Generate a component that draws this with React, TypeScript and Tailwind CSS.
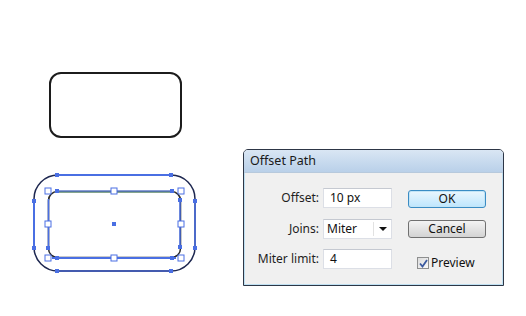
import React from "react";

const B = "#4a6fe3";

function Handle({ x, y }: { x: number; y: number }) {
  return <rect x={x - 3} y={y - 3} width={6} height={6} fill="#fff" stroke={B} strokeWidth={1} />;
}
function Anchor({ x, y }: { x: number; y: number }) {
  return <rect x={x - 2} y={y - 2} width={4} height={4} fill={B} />;
}

function Shapes() {
  return (
    <svg width={210} height={316} className="shrink-0">
      <rect x={50} y={73} width={131} height={64} rx={11} fill="none" stroke="#1c1c1c" strokeWidth={2} />
      {/* outer offset path */}
      <rect x={34} y={175} width={161} height={96} rx={24} fill="none" stroke="#1d2750" strokeWidth={1.5} />
      <line x1={57} y1={175} x2={171} y2={175} stroke={B} strokeWidth={2} />
      <line x1={57} y1={271} x2={171} y2={271} stroke="#3f5bc0" strokeWidth={1.5} />
      <line x1={34} y1={199} x2={34} y2={249} stroke={B} strokeWidth={2} />
      <line x1={195} y1={199} x2={195} y2={249} stroke={B} strokeWidth={1.5} />
      {/* inner path */}
      <rect x={48.5} y={191.5} width={132} height={66} rx={9} fill="none" stroke="#2a2a2a" strokeWidth={1.5} />
      <line x1={57} y1={192} x2={172} y2={192} stroke="#6f9a7a" strokeWidth={1.5} />
      <line x1={57} y1={191} x2={172} y2={191} stroke={B} strokeWidth={1} />
      <line x1={52} y1={258} x2={176} y2={258} stroke={B} strokeWidth={2} />
      <line x1={48.5} y1={199} x2={48.5} y2={249} stroke={B} strokeWidth={1.5} />
      <line x1={180} y1={199} x2={180} y2={249} stroke={B} strokeWidth={1.5} />
      {[
        [57, 175], [171, 175], [34, 201], [34, 248], [195, 201], [195, 248], [57, 271], [171, 271],
        [57, 191], [172, 191], [48, 248], [180, 200], [180, 247], [57, 258], [172, 258], [114, 224],
      ].map(([x, y], i) => (
        <Anchor key={i} x={x} y={y} />
      ))}
      {[
        [48, 191], [181, 191], [48, 258], [181, 258], [114, 191], [114, 258], [48, 224], [181, 224],
      ].map(([x, y], i) => (
        <Handle key={i} x={x} y={y} />
      ))}
    </svg>
  );
}

function Row({ label, children }: { label: string; children: React.ReactNode }) {
  return (
    <div className="flex h-[20px] items-center">
      <div className="w-[74px] text-right text-[#1e1e1e]">{label}</div>
      <div className="ml-[4px] h-[20px] w-[69px]">{children}</div>
    </div>
  );
}

function Input({ value }: { value: string }) {
  return (
    <div className="flex h-full items-center border border-[#dcdfe6] border-t-[#c5c9d1] bg-white pl-[6px] text-[#111]">
      {value}
    </div>
  );
}

export default function App() {
  return (
    <div
      className="flex h-[316px] w-[526px] bg-white"
      style={{ fontFamily: '"Noto Sans", "DejaVu Sans", sans-serif' }}
    >
      <Shapes />
      <div className="ml-[33px] mt-[149px] flex h-[137px] w-[261px] flex-col rounded-t-[5px] border border-[#2d3646] bg-[#f0f0f0] text-[12px] leading-none">
        <div className="flex h-[23px] items-center rounded-t-[4px] border-b border-[#b7c9dc] bg-gradient-to-b from-[#d9e6f4] to-[#b9d0e9] pl-[6px] text-[12.5px] text-[#1a1a1a]">
          Offset Path
        </div>
        <div className="flex flex-1 border-x border-b border-[#bfe0f2]">
          <div className="flex flex-col pt-[15px]">
            <Row label="Offset:">
              <Input value="10 px" />
            </Row>
            <div className="mt-[11px]">
              <Row label="Joins:">
                <div className="flex h-full items-center border border-[#dcdfe6] border-t-[#c5c9d1] bg-white text-[#111]">
                  <div className="flex-1 pl-[3px]">Miter</div>
                  <div className="h-[14px] w-px bg-[#e2e2e2]" />
                  <div className="flex w-[17px] justify-center">
                    <svg width="8" height="4" viewBox="0 0 8 4">
                      <path d="M0 0 L8 0 L4 4 Z" fill="#111" />
                    </svg>
                  </div>
                </div>
              </Row>
            </div>
            <div className="mt-[10px]">
              <Row label="Miter limit:">
                <Input value="4" />
              </Row>
            </div>
          </div>
          <div className="ml-[16px] flex flex-col pt-[17px]">
            <div className="flex h-[18px] w-[78px] items-center justify-center rounded-[3px] border border-[#3a8cc4] bg-gradient-to-b from-[#eaf6fd] to-[#bee6fd] text-[#111] shadow-[inset_0_0_0_1px_#c2e4f6]">
              OK
            </div>
            <div className="mt-[12px] flex h-[18px] w-[78px] items-center justify-center rounded-[3px] border border-[#707070] bg-gradient-to-b from-[#f3f3f3] to-[#d3d3d3] text-[#111]">
              Cancel
            </div>
            <div className="ml-[9px] mt-[19px] flex items-center">
              <div className="flex h-[12px] w-[12px] items-center justify-center border border-[#8e8f8f] bg-gradient-to-br from-[#dcdcdc] to-[#fafafa]">
                <svg width="9" height="9" viewBox="0 0 9 9">
                  <path d="M1 4.5 L3.5 7.5 L8 1" fill="none" stroke="#3b5aa0" strokeWidth={1.8} />
                </svg>
              </div>
              <span className="ml-[2px] text-[#111]">Preview</span>
            </div>
          </div>
        </div>
      </div>
    </div>
  );
}
